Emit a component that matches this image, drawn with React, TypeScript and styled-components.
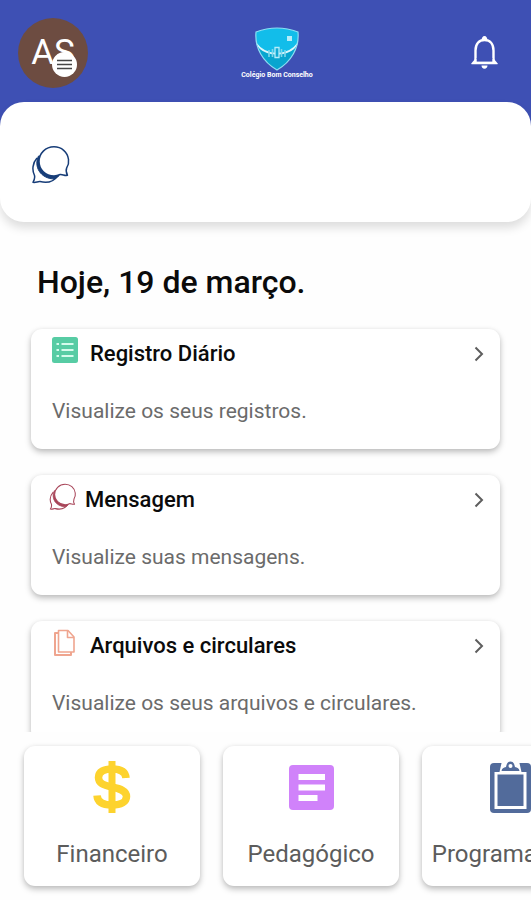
import React from "react";
import styled, { createGlobalStyle } from "styled-components";

const GlobalStyle = createGlobalStyle`
  * { box-sizing: border-box; }
  body {
    margin: 0;
    background: #fefefe;
    color: #0b0b0b;
    font-family: Roboto, "Liberation Sans", sans-serif;
  }
  button { font: inherit; color: inherit; border: 0; padding: 0; background: none; cursor: pointer; }
  h1, h2, p { margin: 0; }
`;

const Screen = styled.div`
  display: flex;
  flex-direction: column;
  height: 100vh;
  overflow: hidden;
`;

const Header = styled.header`
  display: flex;
  justify-content: space-between;
  align-items: center;
  padding: 18px 28px 38px 18px;
  background: #3e50b4;
`;

const Avatar = styled.button`
  position: relative;
  width: 70px;
  height: 70px;
  border-radius: 50%;
  background: #6d4c41;
  color: #fff;
  font-size: 35px;
  line-height: 70px;
  text-align: center;
`;

const MenuBadge = styled.span`
  position: absolute;
  left: 34px;
  top: 34px;
  display: flex;
  align-items: center;
  justify-content: center;
  width: 25px;
  height: 25px;
  border-radius: 50%;
  background: #fff;
`;

const Brand = styled.div`
  display: flex;
  flex-direction: column;
  align-items: center;
  color: #fff;
  font-size: 7px;
  font-weight: 700;
  line-height: 8px;
`;

const BellButton = styled.button`
  display: flex;
`;

const MessagePanel = styled.section`
  flex: none;
  margin-top: -24px;
  padding: 43px 31px 37px;
  border-radius: 24px;
  background: #fff;
  box-shadow: 0 6px 10px rgba(0, 0, 0, 0.13);
`;

const PanelButton = styled.button`
  display: flex;
`;

const Main = styled.main`
  flex: 1;
  min-height: 0;
  overflow-y: auto;
  scrollbar-width: none;
  padding: 40px 31px 26px;
`;

const DateTitle = styled.h1`
  margin: 0 6px 27px;
  font-size: 32px;
  font-weight: 500;
  line-height: 40px;
`;

const CardList = styled.div`
  display: grid;
  gap: 26px;
`;

const surface = `
  border-radius: 11px;
  background: #fff;
  box-shadow: 0 3px 6px rgba(0, 0, 0, 0.26), 0 0 4px rgba(0, 0, 0, 0.04);
`;

const Card = styled.button`
  ${surface}
  display: block;
  width: 100%;
  padding: 8px 15px 24px 21px;
  text-align: left;
`;

const CardHead = styled.span<{ $wideIcon?: boolean }>`
  display: flex;
  align-items: center;
  gap: ${(p) => (p.$wideIcon ? 8 : 12)}px;
  margin-left: ${(p) => (p.$wideIcon ? -3 : 0)}px;
  height: 33px;
`;

const CardIcon = styled.span`
  display: flex;
  align-self: flex-start;
`;

const CardTitle = styled.span`
  flex: 1;
  font-size: 22px;
  font-weight: 500;
  line-height: 32px;
`;

const CardText = styled.span`
  display: block;
  margin-top: 27px;
  color: #6b6b6b;
  font-size: 21px;
  line-height: 28px;
`;

const Shortcuts = styled.nav`
  display: flex;
  flex: none;
  gap: 23px;
  padding: 14px 24px;
  overflow-x: auto;
  scrollbar-width: none;
`;

const Shortcut = styled.button`
  ${surface}
  display: flex;
  flex: none;
  flex-direction: column;
  align-items: center;
  gap: 10px;
  width: 176px;
  padding: 12px 0 16px;
  color: #5c5c5c;
  font-size: 24px;
  line-height: 32px;
  white-space: nowrap;
`;

const ShortcutIcon = styled.span`
  display: flex;
  align-items: center;
  justify-content: center;
  height: 58px;
  margin-bottom: 12px;
`;

function ChatIcon({ size, color }: { size: number; color: string }) {
  return (
    <svg width={size} height={size} viewBox="0 0 40 40" fill="none" aria-hidden="true">
      <path
        d="M6 13C1.500 18 .8 25 3.500 30.500c.5 2-.2 4.500-1.500 6.800 2.700.6 5-1 7-.7 7 1.700 13.500.2 17.500-5.500"
        stroke={color} strokeWidth="1.500" strokeLinejoin="round"
      />
      <path
        d="M7.500 11C2.500 21 9 34 24 34l4-3.300C17 32 8.500 24 9.500 11z"
        fill={color} stroke={color} strokeWidth="1" strokeLinejoin="round"
      />
      <path
        d="M23 1.800C14.500 1.800 8 8.500 8 16.500S14.500 31 23 31c2.500 0 4.500-.7 6.200-1.500 2.200-.4 4.500 1.500 7.300.8-1.400-2.500-1.800-5-.8-7.500 1.800-3 2.200-6 1.800-8.500C36.500 7 30.500 1.800 23 1.800z"
        fill="#fff" stroke={color} strokeWidth="1.500" strokeLinejoin="round"
      />
    </svg>
  );
}

function SchoolLogo() {
  return (
    <svg width="46" height="44" viewBox="0 0 46 44" aria-hidden="true">
      <path d="M2 5Q23-3 44 5C45.500 21 37 35 23 43 9 35 .5 21 2 5z" fill="#08a5cf" />
      <path d="M2 5Q23-3 44 5L44 17Q34 27 23 27T2 17z" fill="#12bdea" />
      <path d="M1.800 15Q10 26 23 26T44.200 15Q42 23 33 26 23 29 13 26 4 23 1.800 15z" fill="#dcf6fc" />
      <path d="M2 5Q23-3 44 5C45.500 21 37 35 23 43 9 35 .5 21 2 5z" fill="none" stroke="#8eddf2" strokeWidth="1.200" />
      <path d="M33 9h5v5h-5z" fill="#b5edfa" />
      <path d="M15 23v7M18.500 22v8M27.500 22v8M31 23v7" stroke="#7fd6ea" strokeWidth="1.600" />
      <path d="M21 20.500h4v10h-4z" fill="#12a9d3" stroke="#b5edfa" strokeWidth="1.300" />
    </svg>
  );
}

function BellIcon() {
  return (
    <svg width="37" height="40" viewBox="0 0 37 40" fill="none" aria-hidden="true">
      <path d="M9.500 29V17.500C9.500 11 13 7 18.500 7s9 4 9 10.500V29" stroke="#fff" strokeWidth="2.400" />
      <path d="M5.500 30.200 9 26h19l3.500 4.200v1H5.500z" fill="#fff" />
      <path d="M10.700 25h15.600v3.600H10.700z" fill="#3e50b4" />
      <path d="M15.500 7.500c.2-3 1.200-4.500 3-4.500s2.800 1.500 3 4.500zM15.500 32.500h6c0 2-1.200 3.200-3 3.200s-3-1.200-3-3.200z" fill="#fff" />
    </svg>
  );
}

function ListIcon() {
  return (
    <svg width="26" height="26" viewBox="0 0 26 26" aria-hidden="true">
      <rect width="26" height="26" rx="2.500" fill="#57cca4" />
      <path d="M4.500 7h2.500M4.500 13h2.500M4.500 19h2.500M9.500 7h12M9.500 13h12M9.500 19h12" stroke="#d5fbec" strokeWidth="2" />
    </svg>
  );
}

function FilesIcon() {
  return (
    <svg width="26" height="28" viewBox="0 0 26 28" fill="none" stroke="#efa58f" strokeWidth="1.600" strokeLinejoin="round" aria-hidden="true">
      <path d="M6 4H3v22h16v-3" strokeWidth="2" />
      <path d="M6.500 1.500h9.500l6 6.500V23H6.500z" fill="#fff" />
      <path d="M15.500 1.500V8.500H22" />
    </svg>
  );
}

function ChevronIcon() {
  return (
    <svg width="12" height="18" viewBox="0 0 12 18" fill="none" aria-hidden="true">
      <path d="M2.500 2.500 9 9l-6.500 6.500" stroke="#5e5e5e" strokeWidth="2" />
    </svg>
  );
}

function DollarIcon() {
  return (
    <svg width="38" height="52" viewBox="0 0 38 52" fill="none" stroke="#fdd32e" aria-hidden="true">
      <path d="M33 17C32.500 10.500 27 8 19 8S5.500 10.500 5.500 16.500c0 5.500 4.500 7.500 13.500 9.500s14.500 4 14.500 9.500S28 44 19 44 4.500 41 4 34.500" strokeWidth="7.500" />
      <path d="M19 0v52" strokeWidth="7" />
    </svg>
  );
}

function ArticleIcon() {
  return (
    <svg width="45" height="45" viewBox="0 0 45 45" aria-hidden="true">
      <rect width="45" height="45" rx="4" fill="#d082fa" />
      <path d="M9.500 9h26.500v6H9.500zM9.500 19.500h26.500v6H9.500zM9.500 30h19v6h-19z" fill="#fff" />
    </svg>
  );
}

function ClipboardIcon() {
  return (
    <svg width="41" height="52" viewBox="0 0 41 52" aria-hidden="true">
      <rect y="2" width="41" height="50" rx="4" fill="#526b9b" />
      <path d="M4.500 11h5L12 0h17l2.500 11h5v37h-32z" fill="#fff" />
      <path d="M7.500 13.500h26V45h-26z" fill="#526b9b" />
      <path d="M11.500 10c.4-2.700 2-3.500 4.500-4 .8-3.800 2-5.500 4.500-5.500S24.200 2.200 25 6c2.500.5 4.100 1.300 4.500 4z" fill="#526b9b" />
      <circle cx="20.500" cy="5" r="2" fill="#fff" />
    </svg>
  );
}

const cards = [
  { title: "Registro Diário", text: "Visualize os seus registros.", icon: <ListIcon /> },
  { title: "Mensagem", text: "Visualize suas mensagens.", icon: <ChatIcon size={28} color="#a84559" />, wideIcon: true },
  { title: "Arquivos e circulares", text: "Visualize os seus arquivos e circulares.", icon: <FilesIcon /> },
];

const shortcuts = [
  { label: "Financeiro", icon: <DollarIcon /> },
  { label: "Pedagógico", icon: <ArticleIcon /> },
  { label: "Programações", icon: <ClipboardIcon /> },
];

export default function App() {
  return (
    <Screen>
      <GlobalStyle />
      <Header>
        <Avatar aria-label="Menu">
          AS
          <MenuBadge>
            <svg width="15" height="11" viewBox="0 0 15 11" aria-hidden="true">
              <path d="M0 1.500h15M0 5.500h15M0 9.500h15" stroke="#454545" strokeWidth="1.500" />
            </svg>
          </MenuBadge>
        </Avatar>
        <Brand>
          <SchoolLogo />
          Colégio Bom Conselho
        </Brand>
        <BellButton aria-label="Notificações"><BellIcon /></BellButton>
      </Header>
      <MessagePanel>
        <PanelButton aria-label="Mensagens"><ChatIcon size={40} color="#173d78" /></PanelButton>
      </MessagePanel>
      <Main>
        <DateTitle>Hoje, 19 de março.</DateTitle>
        <CardList>
          {cards.map((card) => (
            <Card key={card.title}>
              <CardHead $wideIcon={card.wideIcon}>
                <CardIcon>{card.icon}</CardIcon>
                <CardTitle>{card.title}</CardTitle>
                <ChevronIcon />
              </CardHead>
              <CardText>{card.text}</CardText>
            </Card>
          ))}
        </CardList>
      </Main>
      <Shortcuts>
        {shortcuts.map((item) => (
          <Shortcut key={item.label}>
            <ShortcutIcon>{item.icon}</ShortcutIcon>
            {item.label}
          </Shortcut>
        ))}
      </Shortcuts>
    </Screen>
  );
}
